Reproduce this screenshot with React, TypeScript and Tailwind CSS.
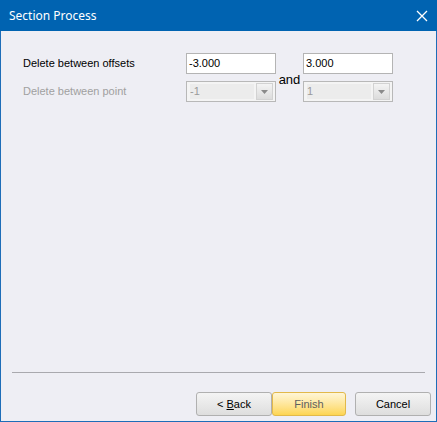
function Combo({ value }: { value: string }) {
  return (
    <div className="flex h-[21px] w-[90px] items-center border border-[#b8b8b8] bg-[#f4f4f4] pl-[3px] pr-[2px]">
      <div className="flex-1 bg-[#ececec] text-[#9a9a9a] leading-[15px] h-[15px]">{value}</div>
      <div className="ml-[2px] flex h-[17px] w-[17px] items-center justify-center border border-[#d2d2d2] bg-gradient-to-b from-[#f4f4f4] to-[#dcdcdc]">
        <svg width="7" height="4" viewBox="0 0 7 4">
          <path d="M0 0h7L3.5 4z" fill="#8a8a8a" />
        </svg>
      </div>
    </div>
  );
}

function TextBox({ value }: { value: string }) {
  return (
    <div className="flex h-[21px] w-[90px] items-center border border-[#b4b4b4] bg-white px-[2px] text-black">
      {value}
    </div>
  );
}

export default function App() {
  return (
    <div
      className="flex h-[422px] w-[437px] flex-col border border-t-0 border-[#1d6db8] bg-[#eeeef4] text-[11px]"
      style={{ fontFamily: '"Liberation Sans", Arial, sans-serif' }}
    >
      <div
        className="-mx-px flex h-[31px] shrink-0 items-center justify-between bg-[#0063b1] pl-[9px] pr-[9px] text-[12px] text-white"
        style={{ fontFamily: '"Noto Sans", "Open Sans", sans-serif' }}
      >
        <span>Section Process</span>
        <svg width="12" height="12" viewBox="0 0 12 12">
          <path d="M1 1l10 10M11 1L1 11" stroke="white" strokeWidth="1.3" />
        </svg>
      </div>

      <div className="flex flex-1 flex-col">
        <div className="flex pt-[22px] pl-[22px]">
          <div className="flex w-[163px] flex-col">
            <div className="flex h-[21px] items-center text-black">Delete between offsets</div>
            <div className="mt-[7px] flex h-[21px] items-center text-[#a0a0a0]">Delete between point</div>
          </div>
          <div className="flex flex-col gap-[7px]">
            <TextBox value="-3.000" />
            <Combo value="-1" />
          </div>
          <div className="flex w-[27px] items-center justify-center pt-[5px] text-[13px] text-black">and</div>
          <div className="flex flex-col gap-[7px]">
            <TextBox value="3.000" />
            <Combo value="1" />
          </div>
        </div>

        <div className="flex-1" />

        <div className="mx-[11px] h-px bg-[#a9a9ae]" />

        <div className="flex justify-end gap-[9px] pt-[19px] pb-[5px] pr-[5px]">
          <div className="flex">
            <button className="h-[24px] w-[76px] rounded-[3px] border border-[#b0b0b0] bg-gradient-to-b from-[#f4f4f4] to-[#dedede] text-black">
              &lt; <span className="underline">B</span>ack
            </button>
            <button className="h-[24px] w-[74px] rounded-[3px] border border-[#e2b94a] bg-gradient-to-b from-[#fff6d6] to-[#fdd550] text-[#5e5e5e]">
              Finish
            </button>
          </div>
          <button className="h-[24px] w-[76px] rounded-[3px] border border-[#b0b0b0] bg-gradient-to-b from-[#f4f4f4] to-[#dedede] text-black">
            Cancel
          </button>
        </div>
      </div>
    </div>
  );
}
